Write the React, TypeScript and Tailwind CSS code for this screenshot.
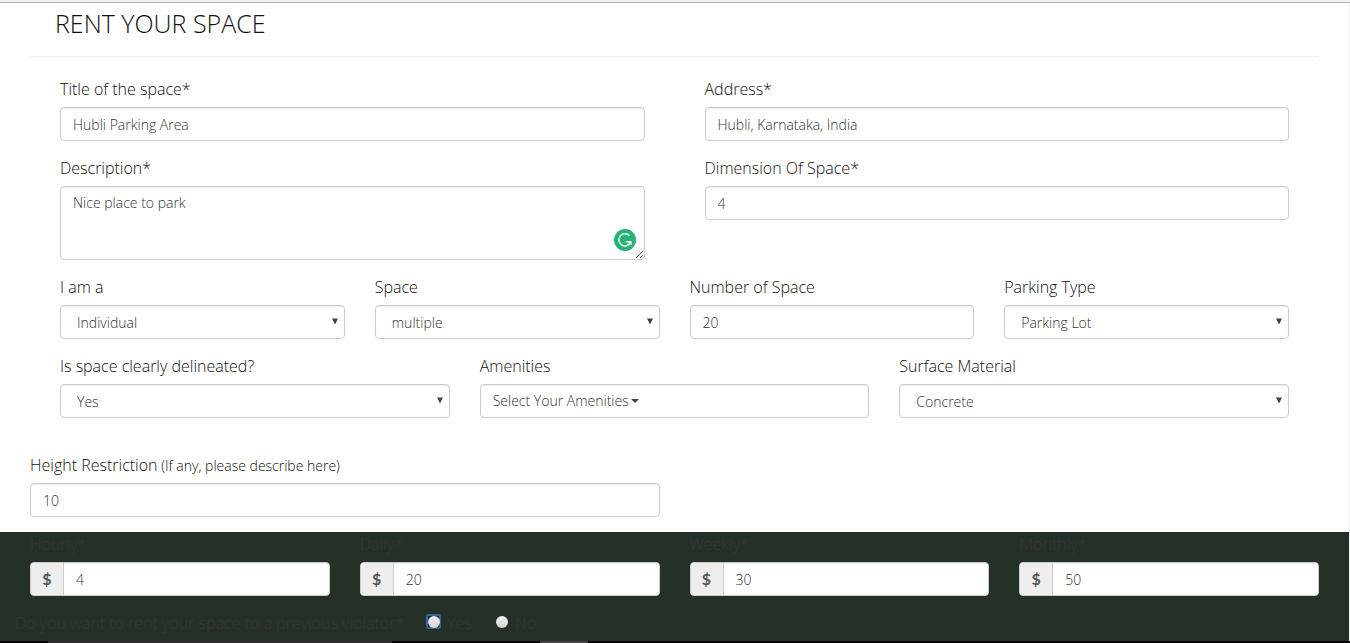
import React, { useState } from "react";

const control =
  "block h-[34px] w-full rounded border border-[#ccc] bg-white px-3 text-sm text-[#333] shadow-[inset_0_1px_1px_rgba(0,0,0,0.075)] outline-none";

type FieldProps = {
  id: string;
  label: string;
  note?: string;
  children: React.ReactNode;
};

function Field({ id, label, note, children }: FieldProps) {
  return (
    <div className="mb-[15px] min-w-0">
      <label htmlFor={id} className="mb-[5px] block text-base leading-[25px] whitespace-nowrap">
        {label}
        {note && <span className="text-sm"> {note}</span>}
      </label>
      {children}
    </div>
  );
}

function TextField({ id, label, note, value }: { id: string; label: string; note?: string; value: string }) {
  return (
    <Field id={id} label={label} note={note}>
      <input id={id} type="text" defaultValue={value} className={control} />
    </Field>
  );
}

function SelectField({ id, label, options }: { id: string; label: string; options: string[] }) {
  return (
    <Field id={id} label={label}>
      <div className="relative">
        <select
          id={id}
          className="block h-[34px] w-full appearance-none rounded border border-[#ccc] bg-white px-4 pt-[2px] text-sm text-[#333] shadow-[inset_0_1px_1px_rgba(0,0,0,0.075)] outline-none"
        >
          {options.map((option) => (
            <option key={option}>{option}</option>
          ))}
        </select>
        <svg
          aria-hidden="true"
          viewBox="0 0 6 7"
          className="pointer-events-none absolute top-[13px] right-[7px] h-[7px] w-[6px] fill-[#444]"
        >
          <path d="M0 0.5H6L3 6.5Z" />
        </svg>
      </div>
    </Field>
  );
}

function PriceField({ id, label, value }: { id: string; label: string; value: string }) {
  return (
    <Field id={id} label={label}>
      <div className="flex h-[34px] overflow-hidden rounded border border-[#ccc] bg-white">
        <span className="flex w-[33px] shrink-0 items-center justify-center border-r border-[#ccc] bg-[#eee] font-['Lato',sans-serif] text-base font-bold text-[#555]">
          $
        </span>
        <input
          id={id}
          type="text"
          defaultValue={value}
          className="min-w-0 flex-1 px-3 pt-[2px] text-sm text-[#333] shadow-[inset_0_1px_1px_rgba(0,0,0,0.075)] outline-none"
        />
      </div>
    </Field>
  );
}

type ChoiceProps = { label: string; checked: boolean; onSelect: () => void };

function Choice({ label, checked, onSelect }: ChoiceProps) {
  return (
    <label className="flex w-[68px] items-center gap-[6px]">
      <span className="mb-1 flex size-[15px] items-center justify-center rounded-[2px] has-checked:bg-[#111b1a] has-checked:ring-2 has-checked:ring-[#3b629e] has-checked:ring-inset">
        <input
          type="radio"
          name="violator"
          checked={checked}
          onChange={onSelect}
          className="size-3 appearance-none rounded-full bg-linear-to-b from-[#f0f0f0] to-[#d6d6d6] outline-none"
        />
      </span>
      {label}
    </label>
  );
}

export default function App() {
  const [violator, setViolator] = useState("yes");

  return (
    <div className="border-r border-[#f0f0f0] bg-white font-['Open_Sans',sans-serif] font-light text-[#111]">
      <div className="-mr-px h-[3px] border-b border-[#b2b2b2] bg-[#f2f2f2]" />
      <form>
        <header className="mx-[30px] border-b border-[#eee] pt-1 pb-[17px] pl-[25px]">
          <h1 className="text-[25px] leading-8">RENT YOUR SPACE</h1>
        </header>

        <div className="px-[60px] pt-5">
          <div className="grid grid-cols-2 gap-x-[60px]">
            <TextField id="title" label="Title of the space*" value="Hubli Parking Area" />
            <TextField id="address" label="Address*" value="Hubli, Karnataka, India" />
            <Field id="description" label="Description*">
              <div className="relative">
                <textarea
                  id="description"
                  defaultValue="Nice place to park"
                  className="block h-[74px] w-full rounded border border-[#ccc] bg-white px-3 py-[6px] text-sm text-[#333] shadow-[inset_0_1px_1px_rgba(0,0,0,0.075)] outline-none"
                />
                <svg
                  aria-hidden="true"
                  viewBox="0 0 22 22"
                  className="absolute right-[9px] bottom-[9px] size-[22px]"
                >
                  <circle cx="11" cy="11" r="11" fill="#27b376" />
                  <path
                    d="M15.4 6.6A6.1 6.1 0 1 0 16.4 13.6M11.8 12.7H16"
                    fill="none"
                    stroke="#fff"
                    strokeWidth="1.5"
                  />
                  <path d="M13.2 12H17.6V16.4L16.1 14.9Z" fill="#fff" />
                </svg>
              </div>
            </Field>
            <TextField id="dimension" label="Dimension Of Space*" value="4" />
          </div>

          <div className="grid grid-cols-4 gap-x-[30px]">
            <SelectField id="owner" label="I am a" options={["Individual"]} />
            <SelectField id="space" label="Space" options={["multiple"]} />
            <TextField id="count" label="Number of Space" value="20" />
            <SelectField id="parking" label="Parking Type" options={["Parking Lot"]} />
          </div>

          <div className="grid grid-cols-3 gap-x-[30px]">
            <SelectField id="delineated" label="Is space clearly delineated?" options={["Yes", "No"]} />
            <Field id="amenities" label="Amenities">
              <button
                id="amenities"
                type="button"
                className="flex h-[34px] w-full items-center gap-[2px] rounded border border-[#ccc] bg-white px-3 text-sm text-[#333] shadow-[inset_0_1px_1px_rgba(0,0,0,0.075)]"
              >
                Select Your Amenities
                <svg aria-hidden="true" viewBox="0 0 8 4" className="h-1 w-2 fill-[#444]">
                  <path d="M0 0H8L4 4Z" />
                </svg>
              </button>
            </Field>
            <SelectField id="surface" label="Surface Material" options={["Concrete"]} />
          </div>
        </div>

        <div className="grid grid-cols-2 gap-x-[30px] px-[30px] pt-5">
          <TextField id="height" label="Height Restriction" note="(If any, please describe here)" value="10" />
        </div>

        <div className="bg-[#253127] pb-[5px] text-[#3a3437]">
          <div className="grid grid-cols-4 gap-x-[30px] px-[30px]">
            <PriceField id="hourly" label="Hourly*" value="4" />
            <PriceField id="daily" label="Daily*" value="20" />
            <PriceField id="weekly" label="Weekly*" value="30" />
            <PriceField id="monthly" label="Monthly*" value="50" />
          </div>
          <fieldset className="flex h-[25px] items-center pl-[15px] text-base leading-[25px]">
            <legend className="float-left w-[411px] whitespace-nowrap">
              Do you want to rent your space to a previous violator*
            </legend>
            <Choice label="Yes" checked={violator === "yes"} onSelect={() => setViolator("yes")} />
            <Choice label="No" checked={violator === "no"} onSelect={() => setViolator("no")} />
          </fieldset>
        </div>
      </form>
      <div className="-mr-px flex h-[2px] bg-black">
        <div className="ml-12 w-[344px] bg-[#302e30]" />
        <div className="ml-[148px] w-12 bg-[#444]" />
      </div>
    </div>
  );
}
